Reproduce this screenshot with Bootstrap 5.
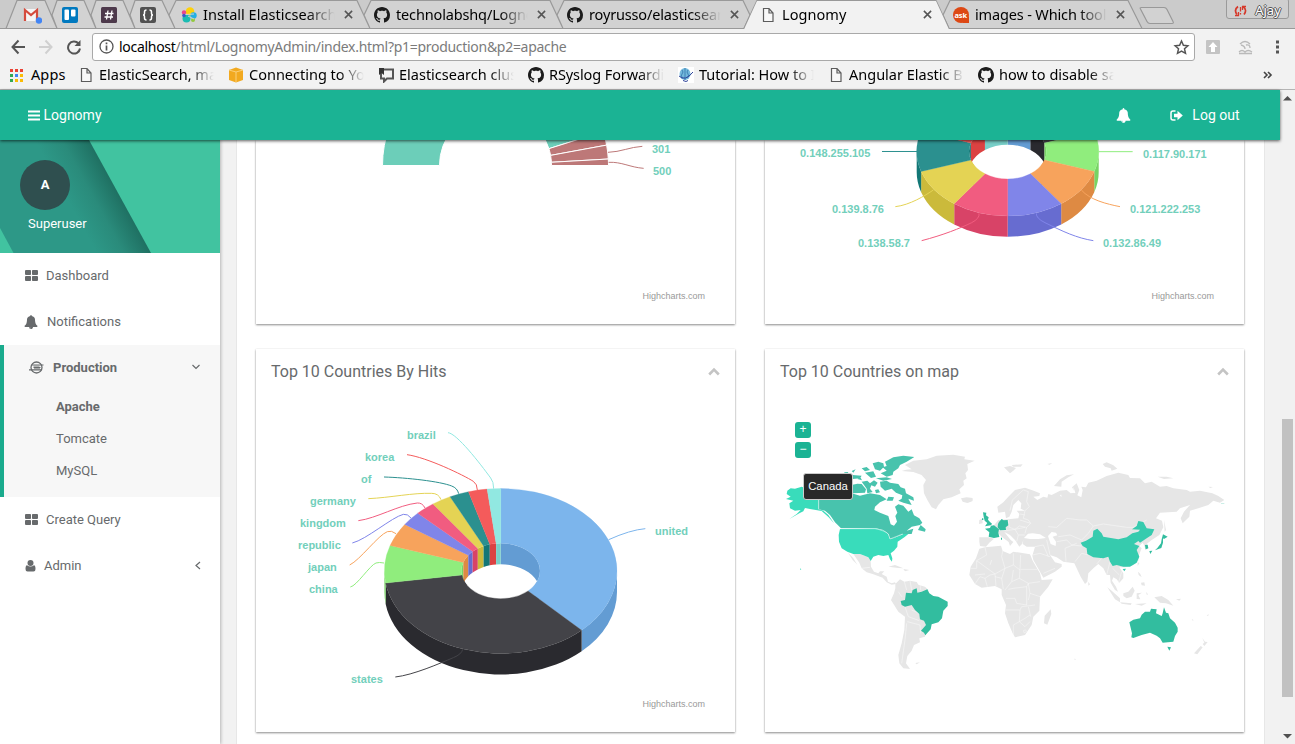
<!DOCTYPE html>
<html lang="en">
<head>
<meta charset="utf-8">
<title>Lognomy</title>
<link href="https://cdn.jsdelivr.net/npm/bootstrap@5.3.0/dist/css/bootstrap.min.css" rel="stylesheet">
<style>
body{height:744px;width:1295px;overflow:hidden;font-family:Roboto,sans-serif;font-size:13px;color:#676a6c;background:#f2f2f2}
svg{display:block;flex:none}
.chrome-ui{height:90px;background:#f2f2f2;border-bottom:1px solid #b4b4b4;font-family:"Noto Sans",sans-serif;color:#000;position:relative}
.tabstrip{height:29px;position:relative;padding-left:23px;background:#cbcbcb}
.tabshapes{position:absolute;left:0;top:0}
.fav{width:39px;position:relative}
.tabitem{width:193px;position:relative;font-size:14.5px;letter-spacing:-.15px}
.tabitem .cap{width:133px;margin-left:6px}
.fade-text{overflow:hidden;white-space:nowrap;-webkit-mask-image:linear-gradient(90deg,#000 78%,transparent 99%);mask-image:linear-gradient(90deg,#000 78%,transparent 99%)}
.xbtn{margin-left:7.5px}
.profile{position:absolute;right:6px;top:-2px;width:63px;height:21px;border:1px solid #9a9a9a;border-radius:3px;font-size:13px;line-height:1;color:#fff;text-shadow:1px 0 0 #555,-1px 0 0 #555,0 1px 0 #555,0 -1px 0 #555;background:#cfcfcf;padding-top:4px}
.toolrow{height:36px;padding-left:11px}
.omni{width:1103px;height:28px;border:1px solid #a9a9a9;border-radius:3px;background:#fff;font-size:14px;color:#7b7b7b;padding-bottom:1px}
.url{letter-spacing:-.29px;white-space:nowrap}
.bookrow{height:20px;padding-left:10px;font-size:14.5px}
.bm{width:150px}
.bm .fade-text{width:116px;margin-left:5px;letter-spacing:0}
.topnav{height:50px;background:#1bb394;color:#fff;font-size:14px;z-index:5;box-shadow:0 1px 3px rgba(0,0,0,.65);position:relative;padding:0 41px 0 28px}
.side{width:220px;background:#fff;box-shadow:1px 0 3px rgba(0,0,0,.25);z-index:2}
.userbox{height:113px;position:relative;color:#fff}
.userbox>svg{position:absolute;left:0;top:0}
.avatar{width:50px;height:50px;border-radius:50%;background:#2f4f4f;margin:20px 0 0 20px;font-weight:700;position:relative}
.item{height:46px;padding-left:24px}
.item svg{margin-bottom:1px}
.grp{height:152px;background:#f7f7f7;border-left:4px solid #1aab8d;font-weight:400}
.grp .item{height:46px;padding-left:25px;padding-bottom:1px}
.sub{height:32px;padding-left:52px;display:flex;align-items:center}
.panel{width:1029px;margin-left:16px;background:#fff;border:1px solid #e7e7e7;border-width:0 1px;padding:0 20px 0 19px}
.tile{width:479px;background:#fff;box-shadow:0 1px 2px rgba(0,0,0,.45),0 0 1px rgba(0,0,0,.08)}
.tile.r1{height:184px}.tile.r2{height:383px}
.ttl{height:45px;padding:0 15.5px 0 15px;font-size:16px}
.chart text{font:700 11px "Liberation Sans",Arial,sans-serif;fill:#72cfbb}
.chart text.credit{font-weight:400;font-size:9px;fill:#999}
.maptile{position:relative}
.tip{position:absolute;left:38px;top:124px;height:27px;width:50px;background:#292929;border:1px solid #ccc;border-radius:3px;color:#fff;font:11.3px "Liberation Sans",sans-serif;line-height:25px;text-align:center}
.zb{position:absolute;left:30px;width:16px;height:16px;border-radius:3px;background:#1bb394;color:#fff;font:12px/15px "Liberation Sans",sans-serif;text-align:center}
.vbar{width:15px;background:#f1f1f1;padding:5px 2px}
.thumb{width:11px;height:278px;background:#c1c1c1;margin-top:317px}
</style>
</head>
<body class="d-flex flex-column m-0">
<svg width="0" height="0" class="position-absolute">
<defs>
<symbol id="gh" viewBox="0 0 16 16"><path fill="#1b1b1b" d="M8 0C3.58 0 0 3.58 0 8c0 3.54 2.29 6.53 5.47 7.59.4.07.55-.17.55-.38 0-.19-.01-.82-.01-1.49-2.01.37-2.53-.49-2.69-.94-.09-.23-.48-.94-.82-1.13-.28-.15-.68-.52-.01-.53.63-.01 1.08.58 1.23.82.72 1.21 1.87.87 2.33.66.07-.52.28-.87.51-1.07-1.78-.2-3.64-.89-3.64-3.95 0-.87.31-1.59.82-2.15-.08-.2-.36-1.02.08-2.12 0 0 .67-.21 2.2.82.64-.18 1.32-.27 2-.27s1.36.09 2 .27c1.53-1.04 2.2-.82 2.2-.82.44 1.1.16 1.92.08 2.12.51.56.82 1.27.82 2.15 0 3.07-1.87 3.75-3.65 3.95.29.25.54.73.54 1.48 0 1.07-.01 1.93-.01 2.2 0 .21.15.46.55.38A8.013 8.013 0 0 0 16 8c0-4.42-3.58-8-8-8z"/></symbol>
<symbol id="doc" viewBox="0 0 16 16"><path d="M3.500 1.500h5.500l4 4.500v8.500h-9.500zM9 1.500v4.500h4" fill="#f8f8f8" stroke="#5c5c5c" stroke-width="1.200"/></symbol>
<symbol id="cross" viewBox="0 0 10 10"><path d="M1 1l8 8M9 1L1 9" stroke="#555" stroke-width="1.700"/></symbol>
<symbol id="bell" viewBox="0 0 1792 1792"><path fill="currentColor" d="M912 1696q0-16-16-16-59 0-101.500-42.500t-42.500-101.500q0-16-16-16t-16 16q0 73 51.500 124.500t124.500 51.500q16 0 16-16zm816-288q0 52-38 90t-90 38h-448q0 106-75 181t-181 75-181-75-75-181h-448q-52 0-90-38t-38-90q50-42 91-88t85-119.500 74.500-158.500 50-206 19.500-260q0-152 117-282.500t307-158.500q-8-19-8-39 0-40 28-68t68-28 68 28 28 68q0 20-8 39 190 28 307 158.500t117 282.500q0 139 19.500 260t50 206 74.500 158.500 85 119.500 91 88z"/></symbol>
<symbol id="thl" viewBox="0 0 13 11"><path fill="currentColor" d="M1 0h4.200a.8.8 0 0 1 .8.800v3.400a.8.8 0 0 1-.8.800H1a1 1 0 0 1-1-1V1a1 1 0 0 1 1-1zM7.800 0H12a1 1 0 0 1 1 1v3a1 1 0 0 1-1 1H7.800a.8.8 0 0 1-.8-.8V.8a.8.8 0 0 1 .8-.8zM1 6h4.200a.8.8 0 0 1 .8.800v3.400a.8.8 0 0 1-.8.800H1a1 1 0 0 1-1-1V7a1 1 0 0 1 1-1zM7.800 6H12a1 1 0 0 1 1 1v3a1 1 0 0 1-1 1H7.800a.8.8 0 0 1-.8-.8V6.800a.8.8 0 0 1 .8-.8z"/></symbol>
<symbol id="up" viewBox="0 0 12 9"><path d="M1.200 7.500L6 2.700l4.800 4.800" fill="none" stroke="#c4c4c4" stroke-width="2.600"/></symbol>
</defs>
</svg>

<header class="chrome-ui flex-shrink-0">
  <div class="tabstrip d-flex align-items-center">
    <svg class="tabshapes" width="1295" height="29" fill="#d2d2d2" stroke="#999" stroke-width="1.200">
      <path d="M6 28.500L17 .5H45L57 28.500zM57 28.500L52 15L57 .5H84L96 28.500zM96 28.500L91 15L96 .5H123L135 28.500zM135 28.500L130 15L135 .5H162L175 28.500zM175 28.500L169 15L176 .5H357L370 28.500zM370 28.500L364 15L371 .5H550L563 28.500zM563 28.500L557 15L564 .5H743L750 15L744 28.500zM949 28.500L943 15L950 .5H1128L1142 28.500z"/>
      <path d="M0 28.500H744L757 .5H936L949 28.500H1295" fill="none"/>
      <path d="M744 29.500L757 1H936L949 29.500z" fill="#f2f2f2" stroke="none"/>
      <path d="M1140.500 9q-1-1.500 1-1.500H1164q2 0 3 2l6 12q1 2-1 2H1150q-2 0-3-2z"/>
    </svg>
    <div class="fav"><svg width="19" height="18" viewBox="0 0 19 18"><path d="M1 3h14v12H1z" fill="#f5f5f5"/><path d="M2 15V4l6 5 6-5v11" fill="none" stroke="#d54b3d" stroke-width="2.200"/><circle cx="16" cy="14.500" r="3.200" fill="#4285f4"/></svg></div>
    <div class="fav"><svg width="16" height="16"><rect width="16" height="16" rx="2" fill="#0079bf"/><rect x="2.500" y="2.500" width="4.500" height="10.500" rx="1" fill="#fff"/><rect x="9" y="2.500" width="4.500" height="7" rx="1" fill="#fff"/></svg></div>
    <div class="fav"><svg width="16" height="16"><rect width="16" height="16" rx="1.500" fill="#4d394b"/><path d="M7 3.500L5.500 12.500M11 3.500L9.500 12.500M4 6.500h8.500M3.500 10h8.500" stroke="#fff" stroke-width="1.300"/></svg></div>
    <div class="fav"><svg width="16" height="16"><rect width="16" height="16" rx="2" fill="#515151"/><path d="M6.500 3q-2 0-2 2v1.500q0 1.500-1.500 1.500 1.500 0 1.500 1.500V11q0 2 2 2M9.500 3q2 0 2 2v1.500q0 1.500 1.500 1.500-1.500 0-1.500 1.500V11q0 2-2 2" stroke="#fff" stroke-width="1.500" fill="none"/></svg></div>
    <div class="tabitem d-flex align-items-center" style="margin-left:2px"><svg width="16" height="16"><circle cx="9" cy="4.500" r="4.300" fill="#fed10a"/><circle cx="5.500" cy="11.500" r="4" fill="#1bbcb2"/><circle cx="12.500" cy="8.500" r="3.200" fill="#24b0e4"/><circle cx="3" cy="5.500" r="2.200" fill="#e8488b"/><circle cx="12" cy="13" r="2" fill="#93c83e"/><circle cx="3" cy="8.500" r="1.800" fill="#3c5ac8"/><path d="M4.500 7.500L13 7M7 9l6 3" stroke="#d2d2d2"/></svg><span class="cap fade-text" style="letter-spacing:.02px">Install Elasticsearch</span><svg class="xbtn" width="9" height="9"><use href="#cross"/></svg></div>
    <div class="tabitem d-flex align-items-center"><svg width="16" height="16"><use href="#gh"/></svg><span class="cap fade-text">technolabshq/Lognomy</span><svg class="xbtn" width="9" height="9"><use href="#cross"/></svg></div>
    <div class="tabitem d-flex align-items-center"><svg width="16" height="16"><use href="#gh"/></svg><span class="cap fade-text">royrusso/elasticsearch</span><svg class="xbtn" width="9" height="9"><use href="#cross"/></svg></div>
    <div class="tabitem d-flex align-items-center"><svg width="16" height="16"><use href="#doc"/></svg><span class="cap fade-text" style="letter-spacing:.05px">Lognomy</span><svg class="xbtn" width="9" height="9"><use href="#cross"/></svg></div>
    <div class="tabitem d-flex align-items-center"><svg width="16" height="16"><circle cx="8" cy="8" r="8" fill="#dd4814"/><path d="M9 16h7V9z" fill="#dd4814"/><text x="1.500" y="10.500" font-size="7.500" font-weight="700" fill="#fff">ask</text></svg><span class="cap fade-text">images - Which tool to</span><svg class="xbtn" width="9" height="9"><use href="#cross"/></svg></div>
    <div class="profile d-flex align-items-center justify-content-center gap-2"><svg width="13" height="12" fill="none" stroke="#d5392b"><path d="M4 1.500Q-.5 5 3 9.500M9 1.500q4.500 3.500 1 8" stroke-width="1.700"/><path d="M1 10.500h4M4.500 7v4M8 1.500h4M8.500 1v4M6.500 2v4.500M6.500 8v1.500" stroke-width="1.300"/></svg><span>Ajay</span></div>
  </div>

  <div class="toolrow d-flex align-items-center">
    <svg width="72" height="16" viewBox="0 0 72 16" fill="none" stroke-width="2"><path d="M14 8H2M7.500 1.500L1.500 8l6 6.500" stroke="#555"/><path d="M28 8h12M34.500 1.500l6 6.500-6 6.500" stroke="#d0d0d0"/><path d="M67.500 4.500A6 6 0 1 0 69 9.500" stroke="#555"/><path d="M69.500 1v6h-6z" fill="#555"/></svg>
    <div class="omni d-flex align-items-center" style="margin-left:9px;padding-left:6px">
      <svg width="15" height="15" fill="none" stroke="#555" stroke-width="1.300"><circle cx="7.500" cy="7.500" r="6.500"/><path d="M7.500 3.500v1.800M7.500 6.500v5" stroke-width="1.700"/></svg>
      <span class="url" style="margin-left:5px"><span class="text-black">localhost</span>/html/LognomyAdmin/index.html?p1=production&amp;p2=apache</span>
      <svg class="ms-auto me-1" width="17" height="16" viewBox="0 0 17 16"><path d="M8.500 2l1.900 4.200 4.500.5-3.400 3.100 1 4.500-4-2.300-4 2.300 1-4.500-3.400-3.100 4.500-.5z" fill="none" stroke="#555" stroke-width="1.500"/></svg>
    </div>
    <svg style="margin-left:11px" width="78" height="16"><rect y="1" width="14" height="14" rx="1" fill="#c4c4c4"/><path d="M7 3l4.500 5H9v5H5V8H2.500z" fill="#fff"/><g fill="none" stroke="#b9b9b9" stroke-width="1.300"><path d="M34 5q5-5 10 0M35 6q4 1 4 4M40 6q4-1 4 3M33 13q3-3 6 0 3-3 7 0M33 14.500h13"/></g><path d="M70 1.500h3v3h-3zM70 6.500h3v3h-3zM70 11.500h3v3h-3z" fill="#555"/></svg>
  </div>

  <div class="bookrow d-flex align-items-center">
    <svg width="14" height="13"><path fill="#ea4335" d="M0 0h3v3H0zM5 0h3v3H5zM10 0h3v3h-3z"/><path fill="#34a853" d="M0 5h3v3H0zM0 10h3v3H0z"/><path fill="#4285f4" d="M5 5h3v3H5z"/><path fill="#fbbc05" d="M10 5h3v3h-3zM5 10h3v3H5zM10 10h3v3h-3z"/></svg>
    <span style="width:47px;margin-left:7px;letter-spacing:.1px">Apps</span>
    <div class="bm d-flex align-items-center"><svg width="16" height="16"><use href="#doc"/></svg><span class="fade-text">ElasticSearch, make</span></div>
    <div class="bm d-flex align-items-center"><svg width="16" height="16"><path d="M1 3l7-2.500L15 3v10l-7 2.500L1 13z" fill="#f2a91f"/><path d="M1 3l7 2 7-2M8 5v10" stroke="#fbd07a" fill="none"/></svg><span class="fade-text">Connecting to Your</span></div>
    <div class="bm d-flex align-items-center"><svg width="16" height="16"><path d="M3 2.500h12v9H9l-3 3v-3H3z" fill="none" stroke="#555" stroke-width="2"/><path d="M1 1h5v7L3.500 6 1 8z" fill="#333"/></svg><span class="fade-text">Elasticsearch cluster</span></div>
    <div class="bm d-flex align-items-center"><svg width="16" height="16"><use href="#gh"/></svg><span class="fade-text" style="letter-spacing:-.1px">RSyslog Forwarding</span></div>
    <div class="bm d-flex align-items-center"><svg width="16" height="16"><path fill="#fff" d="M0 0h16v16H0z"/><ellipse cx="7" cy="7" rx="5.500" ry="6" fill="#74b9dc"/><path d="M7 1v12M4 3q2 2 0 4t1 4M10 3q-2 2 0 4t-1 4" fill="none" stroke="#3f83b5"/><path d="M1 9q6 6 14-4M5 13.500l3 1 2-1" fill="none" stroke="#31459b"/></svg><span class="fade-text">Tutorial: How to Install</span></div>
    <div class="bm d-flex align-items-center"><svg width="16" height="16"><use href="#doc"/></svg><span class="fade-text">Angular Elastic Build</span></div>
    <div class="bm d-flex align-items-center"><svg width="16" height="16"><use href="#gh"/></svg><span class="fade-text">how to disable saving</span></div>
    <svg style="margin-left:135px" width="10" height="9" fill="none" stroke="#444" stroke-width="1.600"><path d="M1 1l3 3-3 3M5 1l3 3-3 3"/></svg>
  </div>
</header>

<div class="d-flex flex-grow-1" style="min-height:0">
  <div class="d-flex flex-column" style="width:1280px">
    <nav class="topnav flex-shrink-0 d-flex align-items-center">
      <svg width="12" height="11" class="me-1"><path d="M0 1.500h12M0 5.500h12M0 9.500h12" stroke="#fff" stroke-width="2"/></svg><span style="margin-left:-.5px">Lognomy</span>
      <svg class="ms-auto" width="15" height="15"><use href="#bell"/></svg>
      <svg style="margin-left:38.5px" width="13" height="11"><path d="M5.500 1H3Q1 1 1 3v5q0 2 2 2h2.500" fill="none" stroke="#fff" stroke-width="1.500"/><path d="M4 3.700h3.500V.7L12.800 5.500 7.500 10.300V7.300H4z" fill="#fff"/></svg>
      <span style="margin-left:9.5px;margin-right:-.5px">Log out</span>
    </nav>
    <div class="d-flex flex-grow-1" style="min-height:0">
      <aside class="side">
        <div class="userbox">
          <svg width="220" height="113"><defs><linearGradient id="bandShade" gradientUnits="userSpaceOnUse" x1="78" y1="79" x2="120" y2="56"><stop offset="0" stop-color="#2d9887"/><stop offset=".5" stop-color="#2a8b7b"/><stop offset="1" stop-color="#1f7062"/></linearGradient></defs><path fill="#41c3a0" d="M0 0h220v113H0z"/><path d="M0 0h89l62 113H13.500L0 88z" fill="url(#bandShade)"/></svg>
          <div class="d-flex flex-column"><div class="avatar d-flex align-items-center justify-content-center">A</div><div class="position-relative" style="margin:4px 0 0 28px">Superuser</div></div>
        </div>
        <div class="item d-flex align-items-center"><svg width="13" height="11" style="margin-left:1px"><use href="#thl"/></svg><span style="margin-left:8px">Dashboard</span></div>
        <div class="item d-flex align-items-center"><svg width="14" height="14"><use href="#bell"/></svg><span style="margin-left:9px">Notifications</span></div>
        <div class="grp">
          <div class="item d-flex align-items-center fw-bold"><svg width="15" height="13" fill="none" stroke="#676a6c"><circle cx="7.500" cy="6.500" r="5.500" stroke-width="1.300"/><path d="M2.500 4h12M4.500 6.500h7M0 8.900h12.500" stroke-width="1.200"/><path d="M4.500 5.200h6M5 7.700h6" stroke-width=".7"/></svg><span style="margin-left:9px">Production</span><svg style="margin-left:75px" width="8" height="6"><path d="M.5 1L4 4.500 7.500 1" fill="none" stroke="#676a6c" stroke-width="1.200"/></svg></div>
          <div class="sub fw-bold">Apache</div><div class="sub">Tomcate</div><div class="sub">MySQL</div>
        </div>
        <div class="item d-flex align-items-center"><svg width="13" height="11" style="margin-left:1px"><use href="#thl"/></svg><span style="margin-left:8px">Create Query</span></div>
        <div class="item d-flex align-items-center"><svg width="11" height="12" style="margin-left:1px"><circle cx="5.500" cy="3" r="3" fill="#676a6c"/><path d="M2 5.200q3.500 2.600 7 0Q10.500 5.500 10.500 9q0 2.500-2 2.500h-6Q.5 11.500.5 9 .5 5.500 2 5.200z" fill="#676a6c"/></svg><span style="margin-left:8px">Admin</span><svg style="margin-left:113px" width="6" height="9"><path d="M5 1L1 4.500 5 8" fill="none" stroke="#676a6c" stroke-width="1.200"/></svg></div>
      </aside>

      <main class="panel">
        <div class="d-flex justify-content-between">
          <section class="tile r1"><svg class="chart" width="479" height="184" viewBox="256 140 479 184" id="codes">
            <text x="652" y="153">301</text><text x="653" y="175">500</text><text class="credit" x="642.500" y="299">Highcharts.com</text>
            <g transform="translate(350 130) scale(.33333)" fill="none" stroke="#bd7878" stroke-width="3"><path d="M774 67C812 66 840 51 877 49M776 97C815 95 840 112 881 115"/></g>
          </svg></section>
          <section class="tile r1"><svg class="chart" width="479" height="184" viewBox="765 140 479 184">
            <g id="ips"></g>
            <text x="800" y="157">0.148.255.105</text><text x="1143" y="158">0.117.90.171</text><text x="832" y="213">0.139.8.76</text><text x="1130" y="213">0.121.222.253</text><text x="858" y="247">0.138.58.7</text><text x="1103" y="247">0.132.86.49</text><text class="credit" x="1151.500" y="299">Highcharts.com</text>
            <g transform="translate(780 130) scale(.33333)" fill="none" stroke-width="3"><path stroke="#2b908f" d="M306 64.500H411"/><path stroke="#90ed7d" d="M956 65H1058"/><path stroke="#e4d354" d="M346 230C390 225 435 197 460 180"/><path stroke="#f7a35c" d="M904 180C930 210 980 222 1020 230"/><path stroke="#f15c80" d="M425 332C490 315 540 295 575 278Q600 265 597 250"/><path stroke="#8085e9" d="M769 250Q768 265 795 278C850 305 890 324 940 332"/></g>
          </svg></section>
        </div>
        <div class="d-flex justify-content-between" style="margin-top:25px">
          <section class="tile r2">
            <div class="ttl d-flex align-items-center justify-content-between"><span>Top 10 Countries By Hits</span><svg width="12" height="9"><use href="#up"/></svg></div>
            <svg class="chart" width="479" height="338" viewBox="256 394 479 338">
              <g id="hits"></g>
              <text x="407" y="439">brazil</text><text x="365" y="461">korea</text><text x="361" y="483">of</text><text x="310" y="505">germany</text><text x="300" y="527">kingdom</text><text x="298" y="549">republic</text><text x="308" y="571">japan</text><text x="309" y="593">china</text><text x="351" y="683">states</text><text x="655" y="535">united</text><text class="credit" x="642.500" y="707">Highcharts.com</text>
              <g transform="translate(280 410) scale(.33333)" fill="none" stroke-width="3">
                <path stroke="#91e8e1" d="M504 68C530 70 600 160 632 204Q641 215 641 236"/><path stroke="#f45b5b" d="M381 134C440 142 550 195 580 214Q592 222 592 240"/><path stroke="#2b908f" d="M312 201C380 203 480 214 515 228Q532 234 536 251"/><path stroke="#e4d354" d="M265 266C330 263 400 248 455 250Q476 250 483 269"/><path stroke="#f15c80" d="M235 332C290 325 355 285 412 279Q427 278 435 294"/><path stroke="#8085e9" d="M217 399C260 388 335 322 370 313Q383 311 393 324"/><path stroke="#f7a35c" d="M209 465C240 450 295 375 322 365Q334 360 348 371"/><path stroke="#90ed7d" d="M211 531C230 528 270 465 288 459Q297 456 312 459"/><path stroke="#434348" d="M346 801C400 795 480 760 520 743Q545 733 548 718"/><path stroke="#7cb5ec" d="M986 389Q1050 360 1096 356"/>
              </g>
            </svg>
          </section>
          <section class="tile r2 maptile">
            <div class="ttl d-flex align-items-center justify-content-between"><span>Top 10 Countries on map</span><svg width="12" height="9"><use href="#up"/></svg></div>
            <svg width="479" height="338" viewBox="765 394 479 338">
              <g transform="translate(770 410) scale(.33333)">
                <g fill="#e6e6e6">
                  <path d="M395 183L408 179 425 178 405 165 430 152 470 148 500 137 550 134 585 140 583 148 614 152 592 162 594 180 586 190 590 205 580 212 582 225 568 238 572 250 545 262 520 268 505 285 498 298 485 292 472 270 462 250 460 225 468 210 455 195 430 186z"/>
                  <path d="M573 265L590 262 608 264 607 274 592 279 578 275z"/>
                  <path d="M250 432L270 432 280 436 295 442 302 453 303 470 312 485 325 490 330 484 343 484 335 492 350 500 354 515 365 520 375 517 378 522 365 524 350 517 338 503 322 497 308 492 290 487 275 475 268 458zM233 427L250 445 262 464 248 450zM355 470L375 465 400 475 385 474zM400 477L418 480 405 484z"/>
                  <path d="M376 522L390 508 403 515 420 512 440 516 445 524 465 530 475 540 470 560 490 590 470 650 465 680 448 685 450 697 432 705 425 722 412 738 408 760 420 777 400 775 388 760 385 735 395 700 403 660 405 620 385 605 363 570 372 550 376 535zM436 759L450 757 440 763z"/>
                  <path d="M627 342L628 330 637 326 638 340z"/>
                  <path d="M628 382L657 382 672 386 658 398 648 410 630 408 628 395z"/>
                </g>
                <path fill="#39dcbb" d="M52 242L62 235 75 236 95 230 120 240 146 250 146 298 160 302 175 315 192 340 176 322 155 303 120 297 105 294 100 304 88 310 58 327 80 312 92 300 75 302 60 295 58 280 70 272 48 267 62 260 50 252zM210 357L315 355 340 361 355 373 360 387 372 384 386 378 400 372 412 364 415 372 403 382 383 395 382 410 372 422 362 430 367 445 366 455 360 448 355 435 340 438 325 435 310 440 302 453 295 442 280 436 270 432 250 432 232 425 215 415 207 395 206 375zM90 475l4 3-3 2z"/>
                <g fill="#48c3ad">
                  <path d="M146 250L190 245 245 250 270 257 300 250 330 255 350 268 330 277 315 290 313 300 330 308 355 318 362 343 372 347 381 335 376 318 382 308 375 290 385 283 400 287 415 305 425 298 432 316 448 325 457 338 450 345 425 350 410 362 430 356 425 372 410 372 398 372 385 378 372 384 360 387 355 372 340 360 315 354 213 355 195 337 180 315 165 302 146 298zM444 360L452 345 467 358 465 365z"/>
                  <path d="M332 190L350 182 338 172 350 168 345 155 370 142 400 137 433 141 410 155 390 165 385 175 370 185 368 195 350 200zM308 160L325 155 340 160 342 170 330 182 315 178zM275 175L290 171 300 180 285 184zM245 183L257 178 250 188zM222 187L235 186 230 195zM285 188L310 184 318 200 303 204zM248 195L275 197 270 205 248 207zM318 205L350 202 366 207 340 212zM248 224L262 221 275 222 288 238 285 248 248 250zM275 215L292 212 300 220 312 211 323 218 315 230 304 226 300 236 308 246 292 250 290 236zM330 215L350 212 360 218 385 222 392 232 405 236 408 250 430 262 432 272 415 266 425 285 400 278 385 272 395 266 397 256 378 248 365 236 345 242 332 230zM315 240L325 238 330 247 318 250zM355 260L372 262 368 272 350 272zM262 207L272 203 276 211z"/>
                </g>
                <path fill="none" stroke="#fff" stroke-width="1.500" d="M146 250V298M210 356H315Q345 362 355 372L360 387 398 372M275 475L300 472"/>
                <path fill="none" stroke="#fff" stroke-width="1.300" d="M403 515L410 540M385 545L395 560M420 512L425 540M450 520L452 540M405 590L415 620 448 632M412 635L450 645 452 670M410 640L405 690 395 760M448 610L425 600"/>
                <path fill="#32bd9f" d="M392 573L405 570 408 548 425 550 428 540 440 535 442 548 455 545 472 538 478 550 490 558 505 560 533 575 533 588 520 602 516 625 505 637 485 643 482 658 466 676 462 668 453 662 468 645 462 632 450 628 448 612 435 600 425 585 405 590 395 585z"/>
              </g>
              <g transform="translate(960 440) scale(.33333)">
                <path fill="#e6e6e6" d="M112 200L130 187 145 170 165 150 195 143 215 150 240 160 238 168 220 170 232 180 250 170 262 173 265 162 275 165 300 152 320 150 332 160 346 158 336 142 350 130 358 150 352 166 364 172 368 150 364 140 378 142 385 128 410 122 440 108 475 98 505 105 510 114 540 115 555 130 575 125 600 140 620 138 640 145 680 150 690 155 720 152 757 160 775 168 793 180 780 188 760 182 745 195 715 205 690 212 688 230 668 250 662 235 672 215 690 195 660 205 650 215 600 218 588 235 606 242 610 262 598 285 580 297 575 300 560 312 565 325 557 330 552 315 548 308 538 318 545 325 537 345 535 362 520 375 495 382 478 382 490 400 490 415 478 428 470 418 460 412 456 422 468 440 474 455 465 450 452 428 450 405 440 405 430 385 415 372 400 385 385 400 382 425 375 432 362 410 350 385 343 370 310 365 290 352 270 345 285 367 305 372 305 380 285 395 250 413 240 395 220 360 217 347 225 320 200 320 188 312 190 300 186 312 178 320 165 300 150 285 133 276 152 300 160 306 150 318 146 306 125 290 115 280 100 285 97 262 115 240 145 238 175 235 178 222 170 212 195 212 182 206 184 190 175 180 160 195 155 215 148 230 138 235 135 215 115 218z"/>
                <path fill="#fff" d="M264 288L275 276 288 278 292 286 278 290 288 305 287 318 272 312zM192 294L204 281 218 280 240 283 258 294 235 297 210 297zM300 165l4-1v8zM340 140l6 18-4 2z"/>
                <g fill="#e6e6e6">
                  <path d="M58 326L75 322 123 317 128 333 150 342 160 335 210 343 218 362 240 400 245 420 278 418 265 440 240 470 238 512 220 530 215 555 195 585 165 592 158 580 145 550 135 520 138 495 125 465 125 448 105 438 65 443 45 432 28 405 32 380 48 355z"/>
                  <path d="M272 508L274 522 262 554 252 550 254 527zM5 175l25 0 10 5-15 7-15-2zM132 82L150 78 168 84 160 92 150 100zM155 75L188 73 182 80 160 80zM262 72l15-3-8 5zM282 138L300 118 320 106 342 103 325 112 305 125 304 140zM428 72L440 67 460 76 472 86 455 92 452 85 435 80zM593 110L620 110 640 115 612 117zM745 140l14 1-8 3zM612 240L618 270 614 276zM442 442L455 452 480 475 480 487 465 478zM480 487L515 490 512 495 485 491zM490 460L505 455 518 440 524 452 515 470 500 475 490 468zM530 460L546 458 535 465 541 478 530 477zM583 472L605 468 625 480 640 497 618 490 600 488zM534 395L541 402 545 412 536 405zM543 428L553 427 555 437 545 436zM533 366L538 370 533 378zM385 425l5 8-5 4zM525 492l35-2-15 7zM560 455l4 10-5-2zM648 478l15-2-5 6zM695 536l6 5-3 1zM740 526l7-3-3 5zM342 656l6 1-3 3zM727 594L735 605 743 606 733 618 728 612 733 608zM722 618L728 622 712 643 702 640z"/>
                </g>
                <g fill="none" stroke="#fafafa" stroke-width="1.600">
                  <path d="M150 212L157 180 190 150 205 155 200 185 208 200 195 212 190 235 205 240 212 250 200 262 195 280M180 222L195 225M145 240L148 262 165 268 195 262M117 270L140 272 165 268 175 285 170 305M165 268L178 258 200 262M175 285L195 285M212 250L180 240M265 260L290 262 320 235 360 240 380 240 400 258 430 252 500 262 520 262 560 240M400 258L385 280 365 300 330 285 295 290M290 305L320 300 335 315 365 318M225 320L250 315 265 350M260 300L270 345M315 325L318 365M345 365L365 340 385 345M315 325L350 310M410 372L425 355M450 365L440 405M458 385L478 405M475 430L485 395M218 345L240 340 270 350M250 400L285 385"/>
                  <path d="M75 322L80 345 50 362M50 362L105 402 135 385 125 350 128 333M50 362V385H32M105 402L90 405 75 415 60 410 45 432M75 415L82 440M105 402L108 438M135 385L160 375 160 340M160 375L180 390 182 345M182 388H232M135 385L125 415 105 410M125 415L130 448M160 390L155 425 135 450M180 390L178 415 205 430 240 425M155 425L178 415M145 448L160 445 200 440 205 430M205 430L210 460 240 470M200 440L200 495 170 490 165 475 138 475M138 510H180L185 500 225 495M210 460L205 480M180 510L178 545 160 555V585M178 545L195 535 210 525M178 545L195 560 210 545M205 500L212 530M45 405L75 402M90 375L95 360"/>
                  <path d="M190 572q8-6 10 2l-7 5z"/>
                </g>
                <path fill="#36cbae" d="M362 308L378 302 398 290 400 272 412 266 425 280 430 290 475 298 500 292 517 280 535 275 540 269 516 268 530 258 535 243 550 246 560 265 583 268 575 285 560 295 540 308 535 303 522 312 538 318 530 330 538 350 530 368 510 380 490 380 470 375 458 378 450 365 445 350 430 355 400 352 382 342 380 325 368 318zM488 387L498 386 493 394z"/>
                <path fill="#32bd9f" d="M69 217L79 218 78 226 86 232 84 239 90 246 96 251 93 256 75 259 82 249 74 242 71 230zM75 266L90 264 93 257 102 256 117 268 115 278 118 291 102 294 86 290 88 277zM114 252L117 246 125 237 131 241 143 240 145 256 137 262 138 270 120 271 113 262zM508 547L520 539 540 535 545 524 555 515 570 515 573 506 590 508 588 520 605 528 608 520 612 502 618 518 625 520 630 535 645 548 653 563 653 575 645 588 640 605 608 608 600 595 590 587 570 578 545 585 520 594 514 592 516 580zM622 620L633 622 628 632zM609 283L623 290 612 297 609 295 609 308 604 324 585 331 592 324 603 310 605 298zM568 333L577 332 571 342zM555 315L563 314 565 325 557 328zM123 293h3v6h-3zM66 235h4v5h-4zM783 189h10v1h-10z"/>
              </g>
            </svg>
            <div class="zb" style="top:73px">+</div><div class="zb" style="top:93px">−</div>
            <div class="tip">Canada</div>
          </section>
        </div>
      </main>
    </div>
  </div>
  <div class="vbar d-flex flex-column align-items-center">
    <svg width="9" height="7"><path d="M0 5.500h9L4.500 1z" fill="#505050"/></svg>
    <div class="thumb flex-shrink-0"></div>
    <svg style="margin-top:37px" width="9" height="6"><path d="M0 0h9L4.500 4.500z" fill="#505050"/></svg>
  </div>
</div>

<script src="https://cdn.jsdelivr.net/npm/bootstrap@5.3.0/dist/js/bootstrap.bundle.min.js"></script>
<script>
const top10=['#7cb5ec','#434348','#90ed7d','#f7a35c','#8085e9','#f15c80','#e4d354','#2b908f','#f45b5b','#91e8e1'];
const side10=['#639cd3','#2a2a2f','#77d464','#de8a43','#676cd0','#d84367','#cbba3b','#127776','#db4242','#78cfc8'];
const pt=(c,rx,ry,a,dy=0)=>{const r=a*Math.PI/180;return (c[0]+rx*Math.sin(r)).toFixed(2)+' '+(c[1]-ry*Math.cos(r)+dy).toFixed(2)};
const arc=(c,rx,ry,a,b,dy=0)=>`A${rx} ${ry} 0 ${Math.abs(b-a)>180?1:0} ${b>a?1:0} ${pt(c,rx,ry,b,dy)}`;
const wall=(c,rx,ry,a,b,d,f)=>a<b?`<path fill="${f}" d="M${pt(c,rx,ry,a)}${arc(c,rx,ry,a,b)}L${pt(c,rx,ry,b,d)}${arc(c,rx,ry,b,a,d)}z"/>`:'';
// 3D ring: inner walls, then front walls, then the top faces
function ring(id,c,R,r,d,stops){
  let inner='',outer='',face='';
  for(let i=0;i<10;i++){
    const a=stops[i],b=stops[i+1];
    inner+=wall(c,...r,a,Math.min(b,120),d,side10[i])+wall(c,...r,Math.max(a,240),b,d,side10[i]);
    outer+=wall(c,...R,Math.max(a,90),Math.min(b,270),d,side10[i]);
    face+=`<path fill="${top10[i]}" stroke="${top10[i]}" stroke-width=".3" d="M${pt(c,...R,a)}${arc(c,...R,a,b)}L${pt(c,...r,b)}${arc(c,...r,b,a)}z"/>`;
  }
  document.getElementById(id).innerHTML=inner+outer+face;
}
ring('hits',[500.7,571],[116.3,82.5],[39.3,27.8],21,[0,135.9,261.6,288,304.4,314.5,324.4,334.2,343.9,353.3,360]);
ring('ips',[1007.700,151.5],[91,64.5],[38.700,27.5],20.7,[0,36,72,108,144,180,216,252,288,324,360]);
// half ring of response codes
let half='';
[[-90,72.5,'#6cceb9'],[72.5,79.6,'#bd7878'],[79.6,86.7,'#bd7878'],[86.7,90,'#bd7878']].forEach(([a,b,f])=>{
  const c=[495.5,165.5];
  half+=`<path fill="${f}" stroke="#fff" d="M${pt(c,113,113,a)}${arc(c,113,113,a,b)}L${pt(c,56,56,b)}${arc(c,56,56,b,a)}z"/>`;
});
document.getElementById('codes').insertAdjacentHTML('afterbegin',half);
</script>
</body>
</html>
